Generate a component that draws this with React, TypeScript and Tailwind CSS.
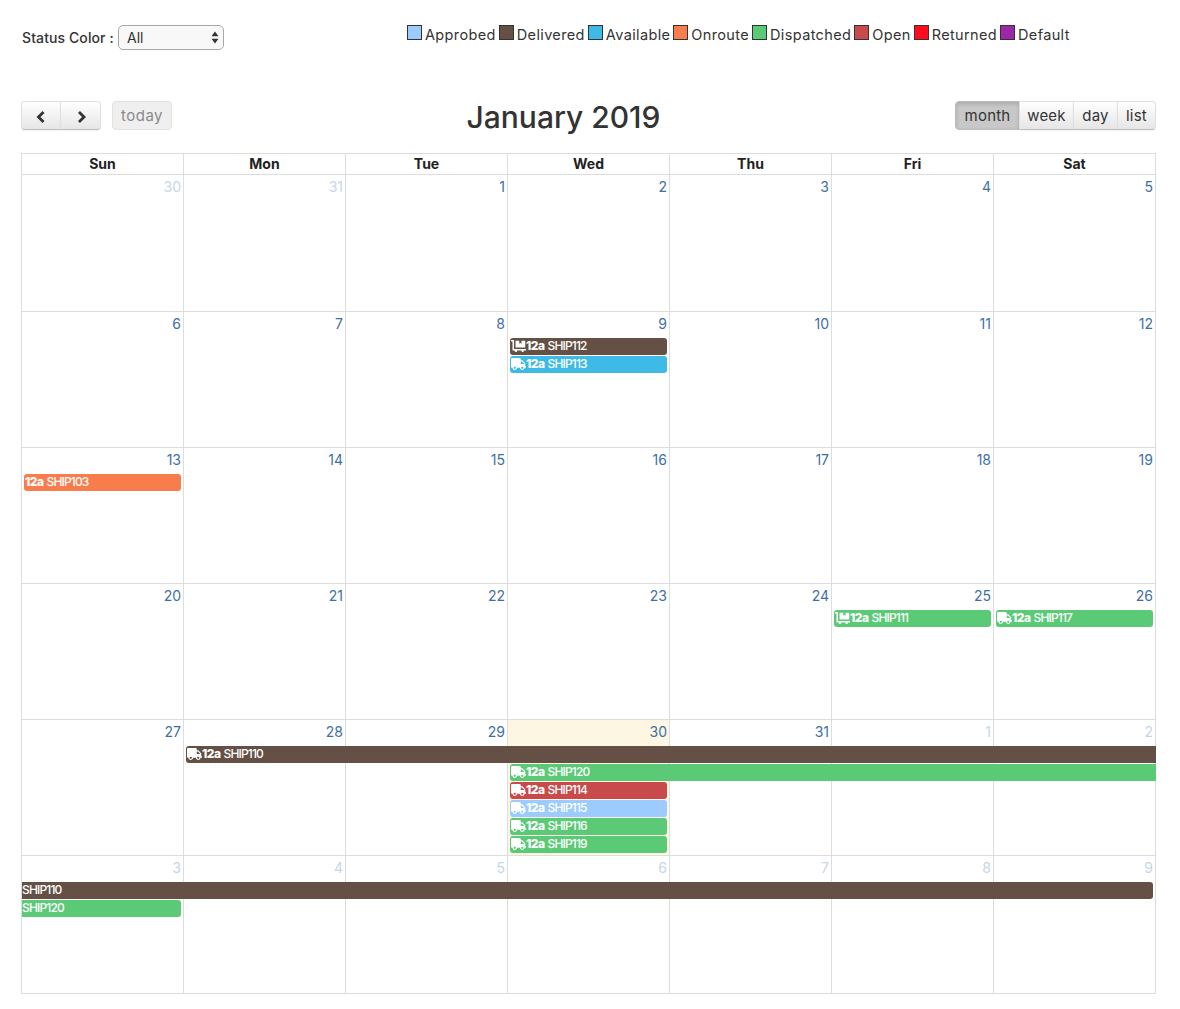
import { FaTruck, FaDollyFlatbed } from 'react-icons/fa';

interface CalEvent {
  col: string;
  row: string;
  color: string;
  title: string;
  time?: boolean;
  icon?: 'truck' | 'dolly';
  // event carries on from the previous week / into the next one
  fromPrev?: boolean;
  toNext?: boolean;
}

interface Week {
  height: string;
  days: number[];
  muted: number[];
  today?: number;
  events: CalEvent[];
}

const legend = [
  { name: 'Approbed', color: 'bg-[#9bcbff]' },
  { name: 'Delivered', color: 'bg-[#645045]' },
  { name: 'Available', color: 'bg-[#3dbbe6]' },
  { name: 'Onroute', color: 'bg-[#f97d4c]' },
  { name: 'Dispatched', color: 'bg-[#5bca77]' },
  { name: 'Open', color: 'bg-[#c94a4a]' },
  { name: 'Returned', color: 'bg-[#ff0a1e]' },
  { name: 'Default', color: 'bg-[#9c27a8]' },
];

const dayNames = ['Sun', 'Mon', 'Tue', 'Wed', 'Thu', 'Fri', 'Sat'];

const weeks: Week[] = [
  { height: 'h-[137px]', days: [30, 31, 1, 2, 3, 4, 5], muted: [0, 1], events: [] },
  {
    height: 'h-[136px]',
    days: [6, 7, 8, 9, 10, 11, 12],
    muted: [],
    events: [
      { col: 'col-start-4 col-span-1', row: 'row-start-2', color: 'bg-[#645045]', title: 'SHIP112', time: true, icon: 'dolly' },
      { col: 'col-start-4 col-span-1', row: 'row-start-3', color: 'bg-[#3dbbe6]', title: 'SHIP113', time: true, icon: 'truck' },
    ],
  },
  {
    height: 'h-[136px]',
    days: [13, 14, 15, 16, 17, 18, 19],
    muted: [],
    events: [
      { col: 'col-start-1 col-span-1', row: 'row-start-2', color: 'bg-[#f97d4c]', title: 'SHIP103', time: true },
    ],
  },
  {
    height: 'h-[136px]',
    days: [20, 21, 22, 23, 24, 25, 26],
    muted: [],
    events: [
      { col: 'col-start-6 col-span-1', row: 'row-start-2', color: 'bg-[#5bca77]', title: 'SHIP111', time: true, icon: 'dolly' },
      { col: 'col-start-7 col-span-1', row: 'row-start-2', color: 'bg-[#5bca77]', title: 'SHIP117', time: true, icon: 'truck' },
    ],
  },
  {
    height: 'h-[136px]',
    days: [27, 28, 29, 30, 31, 1, 2],
    muted: [5, 6],
    today: 3,
    events: [
      { col: 'col-start-2 col-span-6', row: 'row-start-2', color: 'bg-[#645045]', title: 'SHIP110', time: true, icon: 'truck', toNext: true },
      { col: 'col-start-4 col-span-4', row: 'row-start-3', color: 'bg-[#5bca77]', title: 'SHIP120', time: true, icon: 'truck', toNext: true },
      { col: 'col-start-4 col-span-1', row: 'row-start-4', color: 'bg-[#c94a4a]', title: 'SHIP114', time: true, icon: 'truck' },
      { col: 'col-start-4 col-span-1', row: 'row-start-5', color: 'bg-[#9bcbff]', title: 'SHIP115', time: true, icon: 'truck' },
      { col: 'col-start-4 col-span-1', row: 'row-start-6', color: 'bg-[#5bca77]', title: 'SHIP116', time: true, icon: 'truck' },
      { col: 'col-start-4 col-span-1', row: 'row-start-7', color: 'bg-[#5bca77]', title: 'SHIP119', time: true, icon: 'truck' },
    ],
  },
  {
    height: 'h-[138px]',
    days: [3, 4, 5, 6, 7, 8, 9],
    muted: [0, 1, 2, 3, 4, 5, 6],
    events: [
      { col: 'col-start-1 col-span-7', row: 'row-start-2', color: 'bg-[#645045]', title: 'SHIP110', fromPrev: true },
      { col: 'col-start-1 col-span-1', row: 'row-start-3', color: 'bg-[#5bca77]', title: 'SHIP120', fromPrev: true },
    ],
  },
];

const colStarts = ['col-start-1', 'col-start-2', 'col-start-3', 'col-start-4', 'col-start-5', 'col-start-6', 'col-start-7'];

function EventBar({ ev }: { ev: CalEvent }) {
  return (
    <div
      className={`${ev.col} ${ev.row} ${ev.color} h-[17px] pb-[2px] flex items-center overflow-hidden whitespace-nowrap text-white text-[12px] leading-none
        ${ev.fromPrev ? 'ml-0 pl-0 rounded-l-none' : 'ml-[2px] pl-[1px] rounded-l-[3px]'}
        ${ev.toNext ? 'mr-0 rounded-r-none' : 'mr-[3px] rounded-r-[3px]'}`}
    >
      {ev.icon === 'truck' && <FaTruck className="w-[15px] h-[12px] shrink-0" />}
      {ev.icon === 'dolly' && <FaDollyFlatbed className="w-[15px] h-[12px] shrink-0" />}
      {ev.time && <span className="font-extrabold tracking-[-0.5px] mr-[3px]">12a</span>}
      <span className="font-medium tracking-[-0.85px]">{ev.title}</span>
    </div>
  );
}

function Toolbar() {
  const btn = 'h-[29px] pt-[2px] flex items-center justify-center bg-gradient-to-b from-white to-[#e6e6e6] border border-[#e0e0e0] border-b-[#bdbdbd] text-[15px] text-[#333] tracking-[0.2px] shadow-[0_1px_2px_rgba(0,0,0,0.05)]';
  return (
    <div className="mt-[51px] h-[29px] flex items-center justify-between w-[1135px]">
      <div className="flex w-[151px]">
        <button className={`${btn} w-[40px] rounded-l-[4px]`}>
          <svg width="14" height="14" viewBox="0 0 14 14" fill="none" stroke="#333" strokeWidth="2.8"><path d="M9.5 2 4.5 7l5 5" /></svg>
        </button>
        <button className={`${btn} w-[41px] -ml-px rounded-r-[4px]`}>
          <svg width="14" height="14" viewBox="0 0 14 14" fill="none" stroke="#333" strokeWidth="2.8"><path d="M5 2l5 5-5 5" /></svg>
        </button>
        <button className="h-[29px] pt-[2px] w-[60px] ml-[11px] rounded-[4px] flex items-center justify-center bg-[#efefef] border border-[#e2e2e2] text-[15px] text-[#8a8a8a] tracking-[0.5px]">
          today
        </button>
      </div>
      <h2 className="mt-[2px] text-[30px] leading-none font-medium text-[#333] whitespace-nowrap">January 2019</h2>
      <div className="flex w-[201px]">
        <button className="h-[29px] pt-[2px] w-[65px] rounded-l-[4px] flex items-center justify-center bg-[#c8c8c8] border border-[#bbb] shadow-[inset_0_2px_4px_rgba(0,0,0,0.15)] text-[15px] text-[#333] tracking-[0.2px]">
          month
        </button>
        <button className={`${btn} w-[55px] -ml-px`}>week</button>
        <button className={`${btn} w-[45px] -ml-px`}>day</button>
        <button className={`${btn} w-[39px] -ml-px rounded-r-[4px]`}>list</button>
      </div>
    </div>
  );
}

export default function App() {
  return (
    <div className="min-h-screen bg-white pl-[21px] pt-[25px] font-['Inter','Noto_Sans',sans-serif] text-[#333]">
      <div className="flex items-start h-[25px]">
        <div className="flex items-center w-[386px]">
          <label className="ml-[1px] text-[14px] font-medium tracking-[0.1px] w-[96px] whitespace-nowrap">Status Color :</label>
          <div className="relative w-[106px] h-[25px]">
            <select className="appearance-none w-full h-full rounded-[5px] border border-[#a8a8a8] bg-[#f8f8f8] pl-[8px] text-[14px] text-[#333] outline-none">
              <option>All</option>
            </select>
            <svg className="absolute right-[5px] top-[6px]" width="8" height="13" viewBox="0 0 8 13" fill="#333">
              <path d="M4 0.5 7.5 5.2H0.5Z" />
              <path d="M4 12.5 7.5 7.8H0.5Z" />
            </svg>
          </div>
        </div>
        <div className="flex items-start">
          {legend.map((item) => (
            <div key={item.name} className="flex items-start mr-[3px]">
              <span className={`${item.color} w-[15px] h-[15px] border border-[#333]`} />
              <span className="ml-[3px] mt-px text-[14.5px] leading-[18px] tracking-[0.36px] whitespace-nowrap">{item.name}</span>
            </div>
          ))}
        </div>
      </div>

      <Toolbar />

      <div className="mt-[23px] w-[1135px] border-l border-t border-[#ddd]">
        <div className="grid grid-cols-7 h-[21px] border-b border-[#ddd]">
          {dayNames.map((d) => (
            <div key={d} className="border-r border-[#ddd] text-center text-[14px] leading-[20px] font-bold text-[#222]">
              {d}
            </div>
          ))}
        </div>
        {weeks.map((week, w) => (
          <div key={w} className={`${week.height} grid grid-cols-7 grid-rows-[26px_repeat(6,18px)_1fr] border-b border-[#ddd]`}>
            {week.days.map((day, i) => (
              <div
                key={i}
                className={`${colStarts[i]} row-span-full row-start-1 border-r border-[#ddd] pr-[2px] text-right text-[14px] leading-[24px] ${week.today === i ? 'bg-[#fdf6e3]' : ''} ${week.muted.includes(i) ? 'text-[#c6d6e8]' : 'text-[#3d6fa8]'}`}
              >
                {day}
              </div>
            ))}
            {week.events.map((ev) => (
              <EventBar key={ev.title + ev.row} ev={ev} />
            ))}
          </div>
        ))}
      </div>
    </div>
  );
}
